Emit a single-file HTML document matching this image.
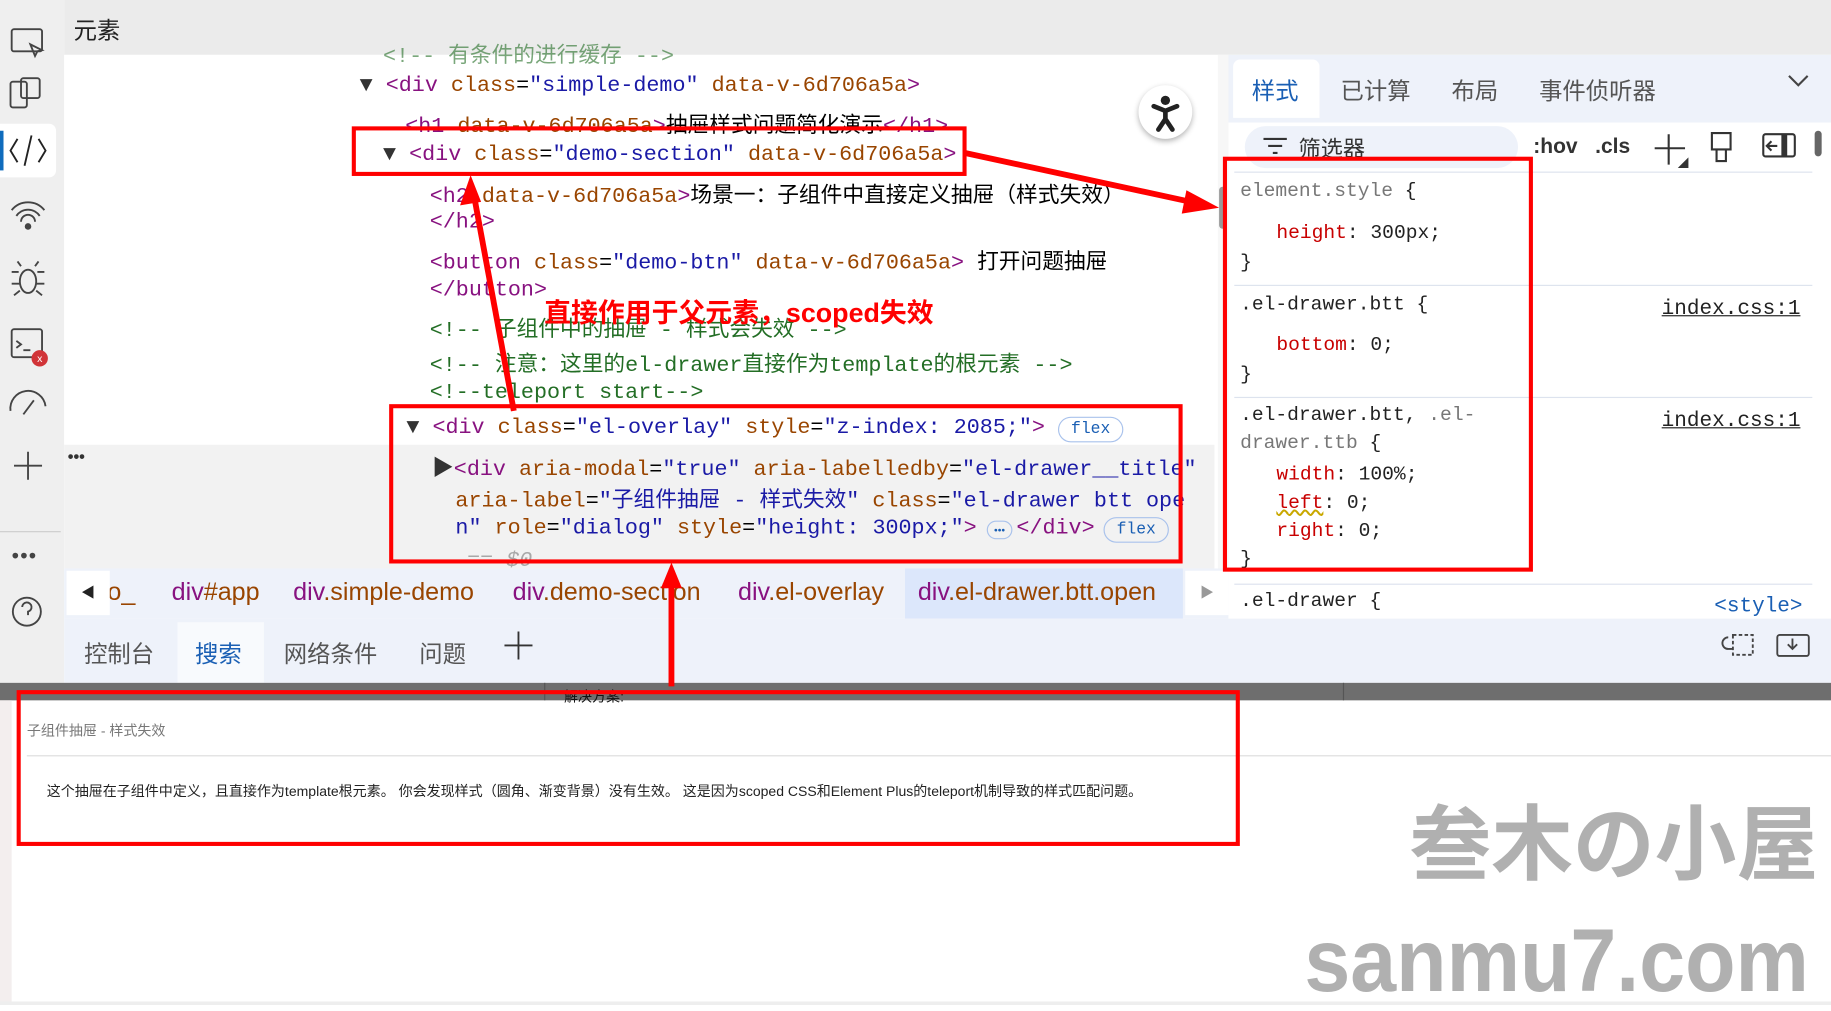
<!DOCTYPE html>
<html><head><meta charset="utf-8"><style>
*{margin:0;padding:0;box-sizing:border-box}
body{width:1831px;height:1005px;overflow:hidden;background:#fff;font-family:"Liberation Sans","Noto Sans CJK SC",sans-serif}
#s{position:absolute;left:0;top:0;width:1568px;height:861px;transform:scale(1.16773,1.16725);transform-origin:0 0;background:#fff}
.a{position:absolute;white-space:nowrap}
.m{font-family:"Liberation Mono","Noto Sans CJK SC",monospace;font-size:18.6px}
.t{color:#881280}.n{color:#994500}.v{color:#1a1aa6}.c{color:#236e25}.k{color:#333}
.cs{font-family:"Liberation Mono","Noto Sans CJK SC",monospace;font-size:16.8px;color:#222}
.p{color:#c80000}.g{color:#777}
.bc{position:absolute;top:495px;font-size:21.5px;color:#994500;white-space:nowrap}
</style></head><body><div id="s">
<div class="a" style="left:0;top:0;width:55px;height:585px;background:#efefef"></div>
<div class="a" style="left:0;top:106px;width:48px;height:46px;background:#fff;border-radius:0 6px 6px 0"></div>
<div class="a" style="left:0;top:112px;width:3px;height:34px;background:#0f6cbd"></div>
<svg class="a" style="left:0;top:0" width="55" height="560" fill="none" stroke="#444" stroke-width="1.6">
<rect x="10" y="25" width="26" height="19" rx="2"/><path d="M26 38l4 10 2-4 4-1z"/>
<rect x="9" y="70" width="14" height="22" rx="2"/><rect x="18" y="67" width="16" height="17" rx="2"/>
<path d="M15 119l-6 10 6 10M33 119l6 10-6 10M27 116l-6 26" stroke="#222"/>
<path d="M10 180a18 18 0 0 1 28 0M14 185a12 12 0 0 1 20 0M18 190a6 6 0 0 1 12 0"/><circle cx="24" cy="194" r="2" fill="#444"/>
<ellipse cx="24" cy="241" rx="7" ry="10"/><path d="M10 233h6M32 233h6M10 243h7M31 243h7M12 253l5-4M36 253l-5-4M18 228l-3-4M30 228l3-4"/>
<rect x="10" y="282" width="26" height="24" rx="2"/><path d="M14 292l4 3-4 3M20 300h6"/>
<path d="M9 352a15 15 0 0 1 30-4M20 355l9-12"/>
<path d="M24 387v24M12 399h24"/>
<circle cx="23" cy="524" r="12"/><path d="M19 520a4 4 0 1 1 5 4v3"/>
</svg>
<div class="a" style="left:27px;top:300px;width:14px;height:14px;border-radius:7px;background:#d13438;color:#fff;font-size:9px;text-align:center;line-height:14px">x</div>
<div class="a" style="left:10px;top:466px;font-size:18px;color:#444;letter-spacing:1px">•••</div>
<div class="a" style="left:0;top:455px;width:52px;height:1px;background:#ccc"></div>
<div class="a" style="left:55px;top:0;width:1513px;height:47px;background:#ebebeb"></div>
<div class="a" style="left:63px;top:10px;font-size:20px;color:#222">元素</div>
<div class="a" style="left:55px;top:47px;width:997px;height:440px;background:#fff"></div>
<div class="a" style="left:55px;top:381px;width:985px;height:106px;background:#f2f2f2"></div>
<div class="a" style="left:58px;top:383px;font-size:14px;color:#333;font-weight:bold">•••</div>
<div class="a" style="left:1043px;top:47px;width:9px;height:440px;background:#f7f7f7"></div>
<div class="a" style="left:1044px;top:160px;width:6px;height:36px;background:#999;border-radius:3px"></div>
<div class="m">
<div class="a c" style="left:328px;top:32px;opacity:.6">&lt;!-- 有条件的进行缓存 --&gt;</div>
<div class="a" style="left:308px;top:63px"><span class="k">▼</span> <span class="t">&lt;div</span> <span class="n">class</span>=<span class="v">"simple-demo"</span> <span class="n">data-v-6d706a5a</span><span class="t">&gt;</span></div>
<div class="a" style="left:347px;top:92px"><span class="t">&lt;h1</span> <span class="n">data-v-6d706a5a</span><span class="t">&gt;</span>抽屉样式问题简化演示<span class="t">&lt;/h1&gt;</span></div>
<div class="a" style="left:328px;top:122px"><span class="k">▼</span> <span class="t">&lt;div</span> <span class="n">class</span>=<span class="v">"demo-section"</span> <span class="n">data-v-6d706a5a</span><span class="t">&gt;</span></div>
<div class="a" style="left:368px;top:152px"><span class="t">&lt;h2</span> <span class="n">data-v-6d706a5a</span><span class="t">&gt;</span>场景一：子组件中直接定义抽屉（样式失效）</div>
<div class="a" style="left:368px;top:180px"><span class="t">&lt;/h2&gt;</span></div>
<div class="a" style="left:368px;top:209px"><span class="t">&lt;button</span> <span class="n">class</span>=<span class="v">"demo-btn"</span> <span class="n">data-v-6d706a5a</span><span class="t">&gt;</span> 打开问题抽屉</div>
<div class="a" style="left:368px;top:238px"><span class="t">&lt;/button&gt;</span></div>
<div class="a c" style="left:368px;top:267px">&lt;!-- 子组件中的抽屉 - 样式会失效 --&gt;</div>
<div class="a c" style="left:368px;top:297px">&lt;!-- 注意：这里的el-drawer直接作为template的根元素 --&gt;</div>
<div class="a c" style="left:368px;top:326px">&lt;!--teleport start--&gt;</div>
<div class="a" style="left:348px;top:356px"><span class="k">▼</span> <span class="t">&lt;div</span> <span class="n">class</span>=<span class="v">"el-overlay"</span> <span class="n">style</span>=<span class="v">"z-index: 2085;"</span><span class="t">&gt;</span></div>
<div class="a" style="left:370px;top:386px"><span class="k">▶</span><span class="t">&lt;div</span> <span class="n">aria-modal</span>=<span class="v">"true"</span> <span class="n">aria-labelledby</span>=<span class="v">"el-drawer__title"</span></div>
<div class="a" style="left:390px;top:413px"><span class="n">aria-label</span>=<span class="v">"子组件抽屉 - 样式失效"</span> <span class="n">class</span>=<span class="v">"el-drawer btt ope</span></div>
<div class="a" style="left:390px;top:442px"><span class="v">n"</span> <span class="n">role</span>=<span class="v">"dialog"</span> <span class="n">style</span>=<span class="v">"height: 300px;"</span><span class="t">&gt;</span><span style="display:inline-block;width:34px"></span><span class="t">&lt;/div&gt;</span></div>
<div class="a g" style="left:400px;top:470px;font-style:italic;opacity:.6">== $0</div>
</div>
<div class="a" style="left:906px;top:357px;width:56px;height:22px;border:1px solid #a9c2ec;border-radius:11px;color:#1a5fb4;font:14px 'Liberation Mono',monospace;text-align:center;line-height:20px">flex</div>
<div class="a" style="left:945px;top:443px;width:56px;height:22px;border:1px solid #a9c2ec;border-radius:11px;color:#1a5fb4;font:14px 'Liberation Mono',monospace;text-align:center;line-height:20px">flex</div>
<div class="a" style="left:845px;top:446px;width:22px;height:16px;border:1px solid #a9c2ec;border-radius:8px;color:#1a5fb4;font-size:9px;text-align:center;line-height:14px">•••</div>
<div class="a" style="left:975px;top:73px;width:46px;height:46px;border-radius:23px;background:#fff;box-shadow:0 2px 5px rgba(0,0,0,.3)"></div>
<svg class="a" style="left:975px;top:73px" width="46" height="46"><circle cx="23" cy="13" r="4" fill="#222"/><path d="M13 18l10 4 10-4M23 22v7l-6 9M23 29l6 9" stroke="#222" stroke-width="4" fill="none" stroke-linecap="round"/></svg>
<div class="a" style="left:55px;top:487px;width:997px;height:43px;background:#eef2fa"></div>
<div class="a" style="left:775px;top:487px;width:238px;height:43px;background:#dce7fb"></div>
<div class="bc" style="left:92px">o_</div>
<div class="bc" style="left:147px"><span class="t">div</span>#app</div>
<div class="bc" style="left:251px"><span class="t">div</span>.simple-demo</div>
<div class="bc" style="left:439px"><span class="t">div</span>.demo-section</div>
<div class="bc" style="left:632px"><span class="t">div</span>.el-overlay</div>
<div class="bc" style="left:786px"><span class="t">div</span>.el-drawer.btt.open</div>
<div class="a" style="left:57px;top:489px;width:37px;height:38px;background:#fff;font-size:12px;text-align:center;line-height:38px;color:#222">◀</div>
<div class="a" style="left:1015px;top:489px;width:37px;height:38px;background:#fff;font-size:12px;text-align:center;line-height:38px;color:#999">▶</div>
<div class="a" style="left:1052px;top:47px;width:516px;height:483px;background:#fff"></div>
<div class="a" style="left:1052px;top:47px;width:516px;height:58px;background:#eef2fa"></div>
<div class="a" style="left:1056px;top:51px;width:74px;height:50px;background:#fff;border-radius:6px 6px 0 0"></div>
<div class="a" style="left:1072px;top:62px;font-size:20px;color:#1a5fb4">样式</div>
<div class="a" style="left:1148px;top:62px;font-size:20px;color:#555">已计算</div>
<div class="a" style="left:1243px;top:62px;font-size:20px;color:#555">布局</div>
<div class="a" style="left:1318px;top:62px;font-size:20px;color:#555">事件侦听器</div>
<svg class="a" style="left:1530px;top:62px" width="20" height="14"><path d="M2 3l8 8 8-8" stroke="#444" stroke-width="1.8" fill="none"/></svg>
<div class="a" style="left:1066px;top:108px;width:234px;height:36px;border-radius:18px;background:#eef2fa"></div>
<svg class="a" style="left:1080px;top:115px" width="24" height="20"><path d="M2 4h20M6 10h12M10 16h4" stroke="#333" stroke-width="1.8"/></svg>
<div class="a" style="left:1112px;top:113px;font-size:19px;color:#333">筛选器</div>
<div class="a" style="left:1313px;top:115px;font-size:18px;font-weight:bold;color:#333">:hov&nbsp;&nbsp;&nbsp;.cls</div>
<svg class="a" style="left:1412px;top:110px" width="150" height="36" fill="none" stroke="#333" stroke-width="1.8"><path d="M5 17h26M17 5v26"/><path d="M27 33l6-6v6z" fill="#333"/><path d="M54 4h16v14H54zM58 18v10h8V18" /><rect x="98" y="5" width="27" height="19" rx="2"/><path d="M116 5v19" stroke-width="5"/><path d="M110 15h-9M105 11l-4 4 4 4"/><rect x="142" y="2" width="6" height="22" rx="3" fill="#666" stroke="none"/></svg>
<div class="a" style="left:1057px;top:147px;width:495px;height:1px;background:#dde3ee"></div>
<div class="a" style="left:1057px;top:244px;width:495px;height:1px;background:#dde3ee"></div>
<div class="a" style="left:1057px;top:340px;width:495px;height:1px;background:#dde3ee"></div>
<div class="a" style="left:1057px;top:500px;width:495px;height:1px;background:#dde3ee"></div>
<div class="cs">
<div class="a" style="left:1062px;top:155px"><span class="g">element.style</span> {</div>
<div class="a" style="left:1093px;top:191px"><span class="p">height</span>: 300px;</div>
<div class="a" style="left:1062px;top:216px">}</div>
<div class="a" style="left:1062px;top:252px">.el-drawer.btt {</div>
<div class="a" style="left:1423px;top:255px;text-decoration:underline;font-size:18px">index.css:1</div>
<div class="a" style="left:1093px;top:287px"><span class="p">bottom</span>: 0;</div>
<div class="a" style="left:1062px;top:312px">}</div>
<div class="a" style="left:1062px;top:347px">.el-drawer.btt, <span class="g">.el-</span></div>
<div class="a" style="left:1423px;top:351px;text-decoration:underline;font-size:18px">index.css:1</div>
<div class="a" style="left:1062px;top:371px"><span class="g">drawer.ttb</span> {</div>
<div class="a" style="left:1093px;top:398px"><span class="p">width</span>: 100%;</div>
<div class="a" style="left:1093px;top:422px"><span class="p" style="text-decoration:underline wavy #c9a800">left</span>: 0;</div>
<div class="a" style="left:1093px;top:446px"><span class="p">right</span>: 0;</div>
<div class="a" style="left:1062px;top:470px">}</div>
<div class="a" style="left:1062px;top:506px">.el-drawer {</div>
<div class="a" style="left:1468px;top:510px;color:#1a5fb4;font-size:18px">&lt;style&gt;</div>
</div>
<div class="a" style="left:55px;top:530px;width:1513px;height:55px;background:#eef2fa"></div>
<div class="a" style="left:152px;top:533px;width:74px;height:52px;background:#f8fafd"></div>
<div class="a" style="left:72px;top:544px;font-size:20px;color:#555">控制台</div>
<div class="a" style="left:167px;top:544px;font-size:20px;color:#1a5fb4">搜索</div>
<div class="a" style="left:243px;top:544px;font-size:20px;color:#555">网络条件</div>
<div class="a" style="left:359px;top:544px;font-size:20px;color:#555">问题</div>
<svg class="a" style="left:430px;top:539px" width="28" height="28"><path d="M14 2v24M2 14h24" stroke="#333" stroke-width="1.6"/></svg>
<svg class="a" style="left:1472px;top:538px" width="80" height="28" fill="none" stroke="#444" stroke-width="1.6"><rect x="12" y="6" width="17" height="17" stroke-dasharray="3 2"/><path d="M8 8a5 5 0 0 0 0 10h4"/><rect x="50" y="6" width="27" height="18" rx="2"/><path d="M63 9v9M59 14l4 4 4-4"/></svg>
<div class="a" style="left:0;top:585px;width:1568px;height:15px;background:#6e6e6e"></div>
<div class="a" style="left:466px;top:585px;width:1px;height:15px;background:#555"></div>
<div class="a" style="left:1150px;top:585px;width:1px;height:15px;background:#555"></div>
<div class="a" style="left:483px;top:588px;font-size:12px;color:#111">解决方案:</div>
<div class="a" style="left:0;top:600px;width:10px;height:261px;background:#f3eeee"></div>
<div class="a" style="left:23px;top:617px;font-size:12px;color:#777">子组件抽屉 - 样式失效</div>
<div class="a" style="left:23px;top:647px;width:1545px;height:1px;background:#ddd"></div>
<div class="a" style="left:40px;top:669px;font-size:12px;color:#222">这个抽屉在子组件中定义，且直接作为template根元素。 你会发现样式（圆角、渐变背景）没有生效。 这是因为scoped CSS和Element Plus的teleport机制导致的样式匹配问题。</div>
<div class="a" style="left:1207px;top:680px;font-size:70px;font-weight:bold;color:#b0b0b0;font-family:'Noto Sans CJK JP',sans-serif;line-height:1.1">叁木の小屋</div>
<div class="a" style="left:1117px;top:786px;font-size:76px;font-weight:bold;color:#b0b0b0;line-height:1;transform:scaleX(0.93);transform-origin:0 0">sanmu7.com</div>
<div class="a" style="left:0;top:858px;width:1568px;height:3px;background:#eee"></div>
<svg class="a" style="left:0;top:0" width="1568" height="861" fill="none" stroke="#f00" stroke-width="3.5">
<rect x="303" y="110" width="523" height="39"/>
<rect x="335" y="348" width="676" height="133"/>
<rect x="1049" y="136" width="262" height="352"/>
<rect x="16" y="593" width="1044" height="130"/>
<path d="M826 131L1020 173" stroke-width="5"/><path d="M1044 178l-28-15-4 20z" fill="#f00" stroke="none"/>
<path d="M440 352L406 168" stroke-width="5"/><path d="M403 150l-9 26 18-3z" fill="#f00" stroke="none"/>
<path d="M575 588V498" stroke-width="5"/><path d="M575 482l-9 22h18z" fill="#f00" stroke="none"/>
</svg>
<div class="a" style="left:466px;top:249px;font-size:23px;font-weight:bold;color:#f00">直接作用于父元素，scoped失效</div>
</div></body></html>
